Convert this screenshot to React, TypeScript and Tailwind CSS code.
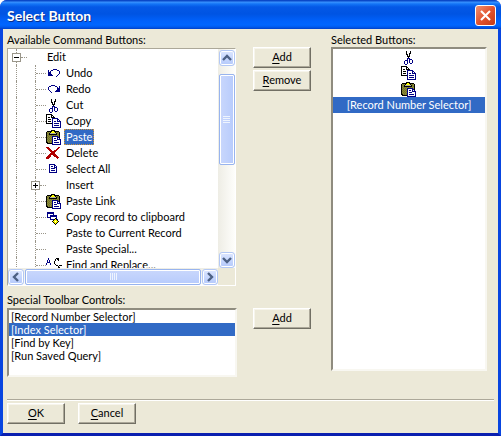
import type { ReactNode } from "react";

const palette: Record<string, string> = {
  k: "#000000",
  n: "#000084",
  w: "#ffffff",
  o: "#8c8c39",
  d: "#73732a",
  y: "#ffff00",
  g: "#b5b5a5",
  r: "#b00000",
};

const art = {
  undo: [
    "",
    "",
    "",
    "",
    ".......nnnn",
    "..n..nn....nn",
    "..n.n........n",
    "..nnn........n",
    "..nnn........n",
    "..nnnn......n",
    "..nnnnn....n",
    "..........n",
  ],
  redo: [
    "",
    "",
    "",
    "",
    ".....nnnn",
    "...nn....nn..n",
    "..n........n.n",
    "..n........nnn",
    "..n........nnn",
    "...n......nnnn",
    "....n....nnnnn",
    ".....n",
  ],
  cut: [
    "",
    "",
    ".....k...k",
    ".....k...k",
    ".....k..kk",
    ".....kk.k",
    "......k.k",
    "......kkk",
    ".......k",
    "......nnn",
    "......n.nnn",
    "....nnn.n..n",
    "...n..n.n..n",
    "...n..n.n..n",
    "...n..n..nn",
    "....nn",
  ],
  copy: [
    "",
    "kkkkkk",
    "kwwwwkk",
    "kwwwwkwk",
    "kwkkwkkkk",
    "kwwwwwnnnnnn",
    "kwkkkwnwwwwnn",
    "kwwwwwnwwwwnwn",
    "kwkkkwnwnnwnnnn",
    "kwwwwwnwwwwwwwn",
    "kkkkkknwnnnnnwn",
    "......nwwwwwwwn",
    "......nwnnnnnwn",
    "......nwwwwwwwn",
    "......nnnnnnnnn",
  ],
  paste: [
    "",
    ".....kkkk",
    ".kkkkkyykkkkk",
    "kodokyyyykodok",
    "kdokggggggkdok",
    "kodkkkkkkkkodk",
    "kdodododododok",
    "kododonnnnnndk",
    "kdododnwwwwnnk",
    "kododonwnnwnwn",
    "kdododnwwwwnnnn",
    "kododonwnnnwwwn",
    "kdododnwwwwwwwn",
    "kkododnwnnnnnwn",
    ".kkkkknwwwwwwwn",
    "......nnnnnnnnn",
  ],
  remove: [
    "",
    "",
    "rrr.........rr",
    ".rrr.......rr",
    "..rrr.....rr",
    "...rrr..rrr",
    "....rrrrrr",
    ".....rrrr",
    "....rrrrr",
    "...rrrrrrr",
    "..rrr..rrrr",
    ".rrrr...rrrr",
    "rrrr......rrr",
    "rrr........r",
  ],
  page: [
    "",
    "",
    "",
    "...nnnnnn",
    "...nwwwwnn",
    "...nwnnwnwn",
    "...nwwwwnnn",
    "...nwnnnnwn",
    "...nwwwwwwn",
    "...nwnnnnwn",
    "...nwwwwwwn",
    "...nnnnnnnn",
  ],
  record: [
    "",
    "",
    "",
    ".nnnnnnn",
    ".nnnnnnn",
    ".nwwwwwn",
    ".nwwnnnnnnn",
    ".nwwnnnnnnn",
    ".nnnnwwwwwn",
    "....nwwwwkn",
    "....nnnnkykn",
    ".......kyyyk",
    "......kyywyyk",
    ".......kyyyk",
    "........kyk",
    ".........k",
  ],
  find: [
    "",
    "..n.......kkk",
    "..n......k.kk",
    ".n.n.....k..k",
    ".n.n....k",
    ".nnn....k",
    "n...n...k",
    "n...n....k",
    "..........kk.kkk",
    "............k",
    "............kk",
    "............k",
  ],
};

type IconName = keyof typeof art;

function PixelIcon({ name }: { name: IconName }) {
  return (
    <svg viewBox="0 0 16 16" shapeRendering="crispEdges" className="size-4 shrink-0" aria-hidden="true">
      {art[name].flatMap((row, y) =>
        [...row].map((c, x) =>
          c === "." ? null : <rect key={`${x}-${y}`} x={x} y={y} width="1" height="1" fill={palette[c]} />,
        ),
      )}
    </svg>
  );
}

const DOTS = "border-dotted border-[#9a968a]";

function Expander({ open, label }: { open: boolean; label: string }) {
  return (
    <span className="flex h-4 w-[9px] shrink-0 flex-col items-center">
      <span className={`h-1 border-l ${DOTS}`} />
      <button
        aria-label={label}
        className="flex size-[9px] shrink-0 items-center justify-center border border-[#9a968a] bg-white"
      >
        <svg viewBox="0 0 7 7" shapeRendering="crispEdges" className="size-[7px]">
          <path d={open ? "M1 3h5v1H1z" : "M1 3h5v1H1zM3 1h1v5H3z"} fill="#000" />
        </svg>
      </button>
      <span className={`h-[3px] border-l ${DOTS}`} />
    </span>
  );
}

const commands: { label: string; icon?: IconName; group?: boolean; selected?: boolean }[] = [
  { label: "Undo", icon: "undo" },
  { label: "Redo", icon: "redo" },
  { label: "Cut", icon: "cut" },
  { label: "Copy", icon: "copy" },
  { label: "Paste", icon: "paste", selected: true },
  { label: "Delete", icon: "remove" },
  { label: "Select All", icon: "page" },
  { label: "Insert", group: true },
  { label: "Paste Link", icon: "paste" },
  { label: "Copy record to clipboard", icon: "record" },
  { label: "Paste to Current Record" },
  { label: "Paste Special..." },
  { label: "Find and Replace...", icon: "find" },
];

function CommandTree() {
  return (
    <ul role="tree" aria-labelledby="available" className="min-h-0 overflow-hidden whitespace-nowrap leading-4">
      <li role="treeitem" aria-expanded="true" className="flex h-4 items-center pl-1">
        <Expander open label="Collapse Edit" />
        <span className={`w-[6px] border-t ${DOTS}`} />
        <span className="ml-5">Edit</span>
      </li>
      {commands.map((c) => (
        <li key={c.label} role="treeitem" aria-selected={!!c.selected} className="flex h-4 items-center pl-2">
          <span className={`h-4 border-l ${DOTS} ${c.group ? "w-[15px]" : "w-[19px]"}`} />
          {c.group ? (
            <>
              <Expander open={false} label="Expand Insert" />
              <span className={`w-[6px] border-t ${DOTS}`} />
            </>
          ) : (
            <span className={`flex h-4 w-[11px] items-center border-l ${DOTS}`}>
              <span className={`w-full border-t ${DOTS}`} />
            </span>
          )}
          {c.icon ? <PixelIcon name={c.icon} /> : <span className="w-4" />}
          <span
            className={
              c.selected
                ? "ml-[2px] bg-[#316ac5] px-[2px] text-white outline-1 -outline-offset-1 outline-dotted outline-[#ce953a]"
                : "ml-1"
            }
          >
            {c.label}
          </span>
        </li>
      ))}
    </ul>
  );
}

function ScrollArrow({ label, d }: { label: string; d: string }) {
  return (
    <button
      aria-label={label}
      className="flex size-4 shrink-0 items-center justify-center rounded-[3px] border border-[#b3c8f5] bg-linear-to-b from-[#dce6ff] to-[#b4c9fb] shadow-[inset_0_0_0_1px_#fff]"
    >
      <svg viewBox="0 0 10 10" className="size-[10px]">
        <path d={d} fill="none" stroke="#4d6185" strokeWidth="2.4" />
      </svg>
    </button>
  );
}

function VerticalScrollbar() {
  return (
    <div className="flex min-h-0 flex-col items-center bg-linear-to-r from-[#eeede5] to-[#fefefb] pt-px">
      <ScrollArrow label="Scroll up" d="M1 7l4-4 4 4" />
      <div className="h-2 shrink-0" />
      <div className="flex h-[91px] w-4 shrink-0 flex-col items-center justify-center gap-px rounded-[2px] border border-[#98b4ee] bg-linear-to-r from-[#c9d7fc] to-[#b7cbfc] shadow-[inset_0_0_0_1px_#fff]">
        {[0, 1, 2, 3].map((i) => (
          <span key={i} className="h-px w-[7px] bg-[#eef4fe]" />
        ))}
      </div>
      <div className="grow" />
      <ScrollArrow label="Scroll down" d="M1 3l4 4 4-4" />
    </div>
  );
}

function HorizontalScrollbar() {
  return (
    <div className="flex min-w-0 items-center gap-px bg-linear-to-b from-[#eeede5] to-[#fefefb]">
      <ScrollArrow label="Scroll left" d="M7 1l-4 4 4 4" />
      <div className="flex h-4 grow items-center justify-center gap-px rounded-[2px] border border-[#98b4ee] bg-linear-to-b from-[#c9d7fc] to-[#b7cbfc] shadow-[inset_0_0_0_1px_#fff]">
        {[0, 1, 2, 3].map((i) => (
          <span key={i} className="h-[7px] w-px bg-[#eef4fe]" />
        ))}
      </div>
      <ScrollArrow label="Scroll right" d="M3 1l4 4-4 4" />
    </div>
  );
}

function PushButton({ children }: { children: ReactNode }) {
  return (
    <button className="flex h-[21px] w-[58px] items-center justify-center border border-t-white border-r-[#716f64] border-b-[#716f64] border-l-white bg-[#ece9d8] pb-[2px] leading-4 shadow-[inset_-1px_-1px_0_#aca899,inset_1px_1px_0_#f7f5ec]">
      <span>{children}</span>
    </button>
  );
}

function Key({ children }: { children: string }) {
  return <span className="underline decoration-1 underline-offset-2">{children}</span>;
}

const SUNKEN =
  "border-2 border-t-[#8f8c7f] border-r-[#f8f7f1] border-b-[#f8f7f1] border-l-[#8f8c7f] bg-white";

export default function App() {
  return (
    <main
      className="overflow-hidden rounded-t-[7px] bg-[#0831d9] text-[11px] text-black"
      style={{ fontFamily: "Lato, 'Liberation Sans', sans-serif" }}
    >
      <header className="flex h-[29px] items-center justify-between bg-[linear-gradient(to_bottom,#0a48c8_0,#0a48c8_1px,#3a93ff_2px,#1374f6_4px,#0458e6_7px,#0054e3_14px,#0061fb_21px,#0066ff_25px,#005bee_27px,#0040c8_29px)] pt-[2px] pr-[5px] pl-[7px]">
        <h1 className="text-[14px] font-bold text-white [text-shadow:1px_1px_0_#0a2f8a]">Select Button</h1>
        <button
          aria-label="Close"
          className="flex size-[21px] items-center justify-center rounded-[3px] border border-white bg-linear-to-br from-[#f0906f] via-[#e2532f] to-[#c53a14]"
        >
          <svg viewBox="0 0 11 11" className="size-[11px]">
            <path d="M1 1l9 9M10 1l-9 9" stroke="#fff" strokeWidth="2.1" />
          </svg>
        </button>
      </header>

      <div className="border-x-3 border-b-3 border-x-[#0845e0] border-b-[#0a1fb0] bg-[#ece9d8] pt-[3px] pr-1 pb-[9px] pl-1">
        <div className="grid grid-cols-[minmax(0,230fr)_94px_minmax(0,156fr)] gap-y-[6px] pr-[7px]">
          <section>
            <h2 id="available" className="h-4 leading-4">
              Available Command Buttons:
            </h2>
            <div className="mr-px grid h-[238px] grid-cols-[minmax(0,1fr)_17px] grid-rows-[minmax(0,1fr)_17px] border border-t-[#aca899] border-r-white border-b-white border-l-[#aca899] bg-white">
              <CommandTree />
              <VerticalScrollbar />
              <HorizontalScrollbar />
              <div className="bg-[#ece9d8]" />
            </div>
          </section>

          <div className="flex flex-col gap-[2px] pt-[15px] pl-4">
            <PushButton>
              <Key>A</Key>dd
            </PushButton>
            <PushButton>
              <Key>R</Key>emove
            </PushButton>
          </div>

          <section className="row-span-2 mb-[6px] flex flex-col">
            <h2 id="selected" className="h-[15px] leading-4">
              Selected Buttons:
            </h2>
            <ul role="listbox" aria-labelledby="selected" className={`grow leading-4 whitespace-nowrap ${SUNKEN}`}>
              {(["cut", "copy", "paste"] as const).map((name) => (
                <li key={name} role="option" aria-selected="false" aria-label={name} className="flex h-4 justify-center">
                  <PixelIcon name={name} />
                </li>
              ))}
              <li role="option" aria-selected="true" className="h-4 bg-[#316ac5] text-center text-white">
                [Record Number Selector]
              </li>
            </ul>
          </section>

          <section>
            <label htmlFor="special" className="block h-4 leading-4">
              Special Toolbar Controls:
            </label>
            <select
              id="special"
              size={5}
              defaultValue="[Index Selector]"
              className={`block h-[69px] w-full appearance-none overflow-hidden outline-none ${SUNKEN}`}
            >
              {["[Record Number Selector]", "[Index Selector]", "[Find by Key]", "[Run Saved Query]"].map((o) => (
                <option
                  key={o}
                  value={o}
                  className="h-[13px] min-h-0 px-[2px] py-0 leading-[13px] checked:bg-[linear-gradient(#316ac5,#316ac5)] checked:[-webkit-text-fill-color:white]"
                >
                  {o}
                </option>
              ))}
            </select>
          </section>

          <div className="pt-4 pl-4">
            <PushButton>
              <Key>A</Key>dd
            </PushButton>
          </div>
        </div>

        <hr className="mt-[22px] border-t border-b border-t-[#aca899] border-b-white" />

        <footer className="mt-[2px] flex gap-[13px]">
          <PushButton>
            <Key>O</Key>K
          </PushButton>
          <PushButton>
            <Key>C</Key>ancel
          </PushButton>
        </footer>
      </div>
    </main>
  );
}
